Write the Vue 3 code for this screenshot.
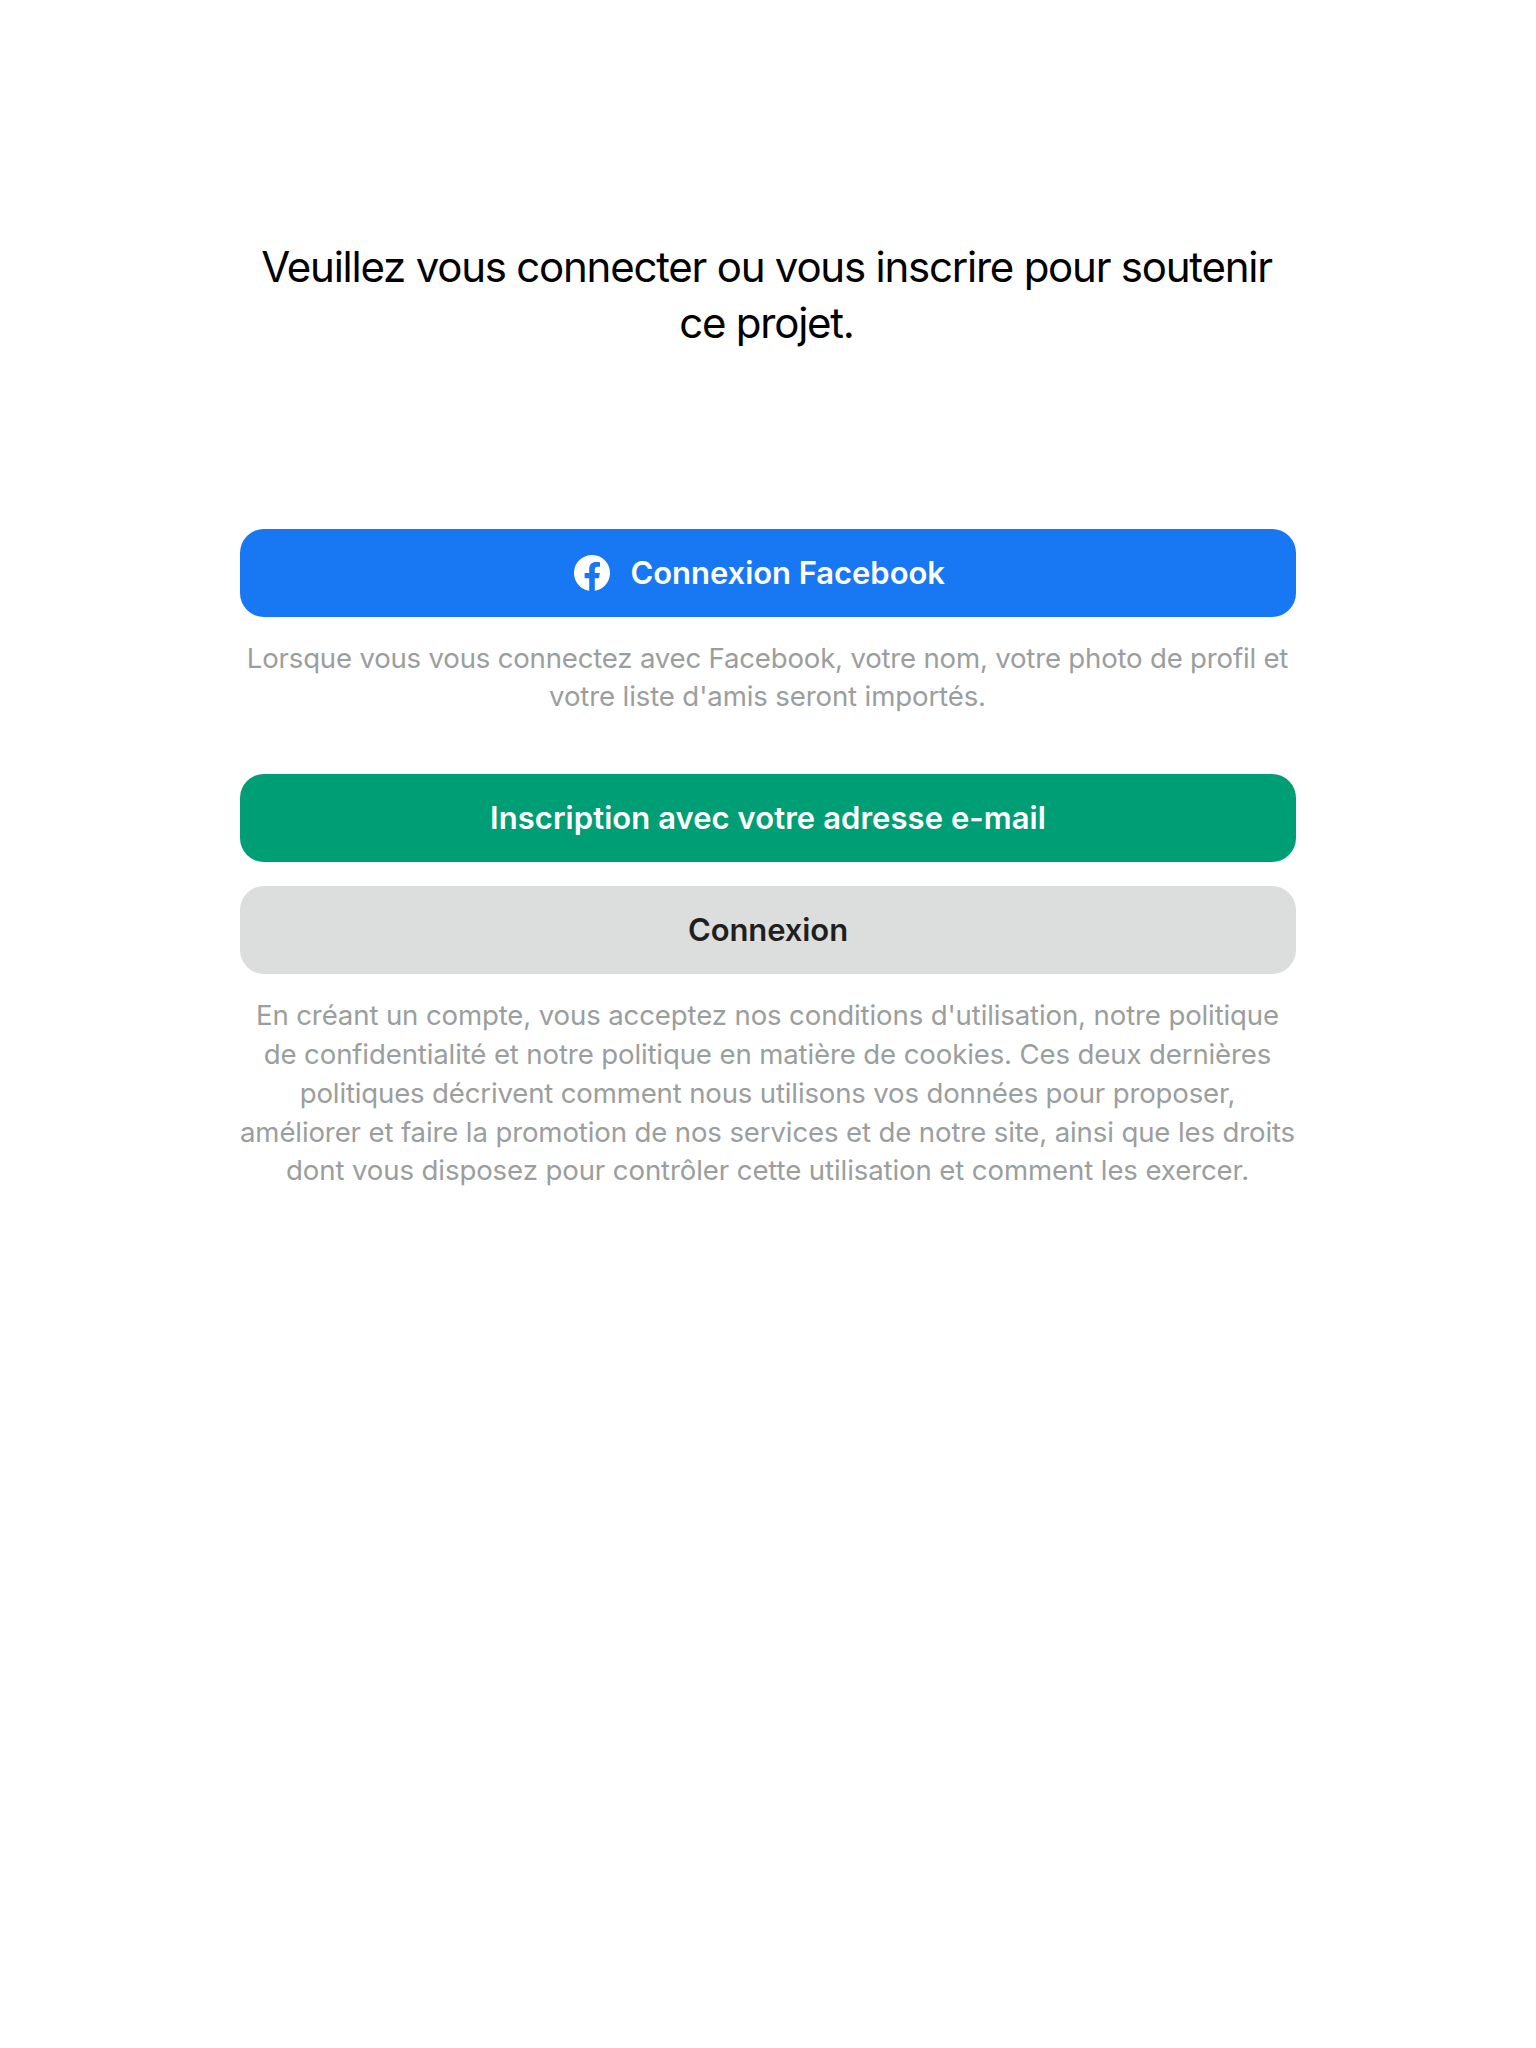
<script setup>
const title = ['Veuillez vous connecter ou vous inscrire pour soutenir', 'ce projet.']
const facebookNote = [
  'Lorsque vous vous connectez avec Facebook, votre nom, votre photo de profil et',
  "votre liste d'amis seront importés.",
]
const terms = [
  "En créant un compte, vous acceptez nos conditions d'utilisation, notre politique",
  'de confidentialité et notre politique en matière de cookies. Ces deux dernières',
  'politiques décrivent comment nous utilisons vos données pour proposer,',
  'améliorer et faire la promotion de nos services et de notre site, ainsi que les droits',
  'dont vous disposez pour contrôler cette utilisation et comment les exercer.',
]
</script>

<template>
  <main class="screen">
    <h1 class="title"><span v-for="l in title" :key="l">{{ l }}</span></h1>
    <button class="btn facebook">
      <svg class="logo" viewBox="0 0 36 36"><path fill="#fff" d="M36 18A18 18 0 1 0 15.19 35.78V23.2h-4.57V18h4.57v-3.97c0-4.51 2.69-7 6.8-7 1.97 0 4.03.35 4.03.35v4.43h-2.27c-2.24 0-2.94 1.39-2.94 2.81V18h5l-.8 5.2h-4.2v12.58A18 18 0 0 0 36 18z" /></svg>
      <span>Connexion Facebook</span>
    </button>
    <p class="note fb-note"><span v-for="(l, i) in facebookNote" :key="l" :class="'f' + i">{{ l }}</span></p>
    <button class="btn signup">Inscription avec votre adresse e-mail</button>
    <button class="btn login">Connexion</button>
    <p class="note terms"><span v-for="(l, i) in terms" :key="l" :class="'c' + i">{{ l }}</span></p>
  </main>
</template>

<style>
body { background: #fff; }
</style>
<style scoped>
.screen { box-sizing: border-box; height: 2048px; padding: 239px 240px 0; background: #fff; font-family: Inter, sans-serif; display: flex; flex-direction: column; }
.title, .note { margin: 0; display: flex; flex-direction: column; align-items: center; white-space: nowrap; font-weight: 400; }
.title { font-size: 42px; line-height: 56px; letter-spacing: -1.23px; color: #000; padding-right: 3px; }
.btn { border: 0; padding: 0; height: 88px; flex: none; border-radius: 24px; font: 600 31px/40px Inter, sans-serif; color: #fff; display: flex; align-items: center; justify-content: center; white-space: nowrap; }
.facebook { background: #1877f2; margin-top: 178px; justify-content: flex-start; padding-left: 334px; letter-spacing: -0.05px; }
.logo { width: 36px; height: 36px; margin-right: 20.5px; }
.note { font-size: 27.6px; color: #9b9e9e; padding-right: 1px; }
.fb-note { margin-top: 22px; line-height: 38px; }
.f0 { letter-spacing: -0.2px; }
.f1 { letter-spacing: -0.13px; }
.signup { background: #009e74; margin-top: 59px; letter-spacing: 0.06px; }
.login { background: #dcdedd; color: #1f1f1f; margin-top: 24px; letter-spacing: -0.1px; }
.terms { margin-top: 22px; line-height: 39px; letter-spacing: -0.135px; }
.c2 { letter-spacing: -0.17px; }
.c4 { letter-spacing: -0.11px; line-height: 37px; }
</style>
